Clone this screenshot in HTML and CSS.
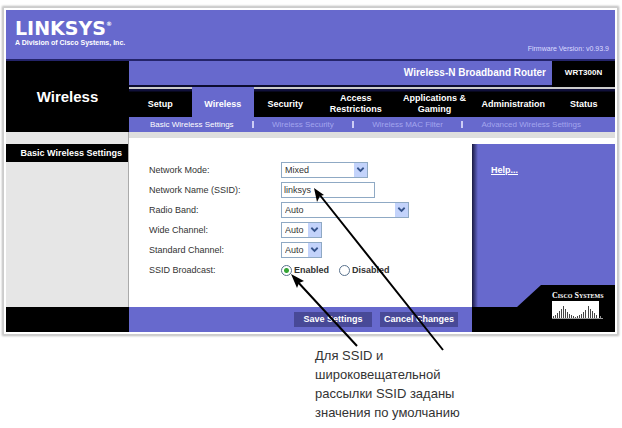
FILE: index.html
```html
<!DOCTYPE html>
<html lang="ru">
<head>
<meta charset="utf-8">
<title>Linksys WRT300N</title>
<link rel="stylesheet" href="styles.css">
</head>
<body>
<main class="figure">
  <div class="router">
    <header class="brand">
      <div class="brand-block">
        <div class="logo">LINKSYS<sup class="reg">®</sup></div>
        <div class="tagline">A Division of Cisco Systems, Inc.</div>
      </div>
      <div class="firmware">Firmware Version: v0.93.9</div>
    </header>

    <div class="top">
      <h1 class="section">Wireless</h1>
      <div class="menus">
        <div class="product">
          <div class="product-name">Wireless-N Broadband Router</div>
          <div class="model">WRT300N</div>
        </div>
        <nav class="tabs">
          <a class="tab" href="#">Setup</a>
          <a class="tab active" href="#">Wireless</a>
          <a class="tab" href="#">Security</a>
          <a class="tab wide" href="#">Access Restrictions</a>
          <a class="tab wide" href="#">Applications &amp; Gaming</a>
          <a class="tab wide" href="#">Administration</a>
          <a class="tab" href="#">Status</a>
        </nav>
        <nav class="subtabs">
          <a class="current" href="#">Basic Wireless Settings</a><i class="bar"></i>
          <a href="#">Wireless Security</a><i class="bar"></i>
          <a href="#">Wireless MAC Filter</a><i class="bar"></i>
          <a href="#">Advanced Wireless Settings</a>
        </nav>
      </div>
    </div>

    <div class="middle">
      <aside class="side"><h2 class="side-title">Basic Wireless Settings</h2></aside>
      <form class="settings" id="settings">
        <label for="mode">Network Mode:</label>
        <span class="select mode"><select id="mode"><option>Mixed</option></select><span class="drop"><svg viewBox="0 0 10 8"><path d="M1.500 1.500 5 5 8.500 1.500"/></svg></span></span>
        <label for="ssid">Network Name (SSID):</label>
        <input class="text" id="ssid" type="text" value="linksys">
        <label for="band">Radio Band:</label>
        <span class="select band"><select id="band"><option>Auto</option></select><span class="drop"><svg viewBox="0 0 10 8"><path d="M1.500 1.500 5 5 8.500 1.500"/></svg></span></span>
        <label for="wide">Wide Channel:</label>
        <span class="select channel"><select id="wide"><option>Auto</option></select><span class="drop"><svg viewBox="0 0 10 8"><path d="M1.500 1.500 5 5 8.500 1.500"/></svg></span></span>
        <label for="standard">Standard Channel:</label>
        <span class="select channel"><select id="standard"><option>Auto</option></select><span class="drop"><svg viewBox="0 0 10 8"><path d="M1.500 1.500 5 5 8.500 1.500"/></svg></span></span>
        <span id="broadcast">SSID Broadcast:</span>
        <span class="radios" role="radiogroup" aria-labelledby="broadcast">
          <label class="radio"><input type="radio" name="broadcast" checked>Enabled</label>
          <label class="radio"><input type="radio" name="broadcast">Disabled</label>
        </span>
      </form>
      <aside class="help">
        <div class="help-panel">
          <a href="#">Help...</a>
          <svg class="wedge" viewBox="0 0 143 22" preserveAspectRatio="none"><path d="M0 22H45L69 0H143V22Z"/></svg>
        </div>
      </aside>
    </div>

    <footer class="bottom">
      <div class="bottom-side"></div>
      <div class="actions">
        <button type="submit" form="settings">Save Settings</button>
        <button type="reset" form="settings">Cancel Changes</button>
      </div>
      <div class="corner">
        <div class="cisco">
          <div class="cisco-name">C<small>ISCO</small> S<small>YSTEMS</small></div>
          <svg class="bridge" viewBox="0 0 51 18">
            <path fill="#fff" d="M0 0H47V17H0Z"/>
            <path stroke="#444" stroke-width="1" d="M1.500 15V17M3.500 14V17M5.500 12V17M7.500 10V17M9.500 8V17M11.500 5V17M13.500 8V17M15.500 11V17M17.500 13V17M19.500 14V17M21.500 15V17M23.500 16V17M25.500 15V17M27.500 14V17M29.500 13V17M31.500 11V17M33.500 9V17M36.500 5V17M38.500 8V17M40.500 10V17M42.500 12V17M44.500 14V17"/>
            <path stroke="#999" d="M0 17.500H51M48.500 15V18"/>
          </svg>
        </div>
      </div>
    </footer>
  </div>

  <p class="caption">Для SSID и широковещательной рассылки SSID заданы значения по умолчанию</p>

  <svg class="arrows" width="622" height="428" viewBox="0 0 622 428" aria-hidden="true">
    <path class="shaft" d="M357 346 296 280M443 350 319 194"/>
    <path d="M291 274 304 281 299 283 297 288ZM314 188 324 195 320 196 317 202Z"/>
  </svg>
</main>
</body>
</html>
```
FILE: styles.css
```css
* { box-sizing: border-box; }

body {
  margin: 0;
  background: #fff;
  font-family: "Liberation Sans", Arial, sans-serif;
  font-size: 9px;
  line-height: 12px;
  color: #333;
}

a { color: inherit; text-decoration: none; }

.figure { position: relative; padding: 8px 5px 0 4px; }

.router {
  border: 2px solid #fff;
  box-shadow: 0 0 0 1px #ccc, 0 0 2px 2px #bbb;
}

.brand {
  display: flex;
  justify-content: space-between;
  align-items: flex-end;
  height: 51px;
  padding: 0 6px 6px 9px;
  background: #6769cd;
  border-bottom: 2px solid #24246a;
  color: #fff;
}
.brand-block { align-self: flex-start; padding-top: 7px; }
.logo {
  font-family: "DejaVu Sans", sans-serif;
  font-weight: bold;
  font-size: 19px;
  line-height: 22px;
}
.reg { font-size: 6px; line-height: 6px; vertical-align: 9px; }
.tagline { font-size: 7px; font-weight: bold; line-height: 8px; }
.firmware { font-size: 7px; line-height: 8px; color: #dcdcff; }

.top { display: flex; }
.section {
  flex: 0 0 123px;
  display: flex;
  align-items: center;
  justify-content: center;
  margin: 0;
  background: #000;
  color: #fff;
  font-size: 15px;
}
.menus { flex: 1; min-width: 0; background: #6769cd; }
.product {
  display: flex;
  height: 26px;
  line-height: 24px;
  color: #fff;
  font-weight: bold;
}
.product-name {
  flex: 1;
  padding-right: 6px;
  text-align: right;
  font-size: 10px;
  border-bottom: 2px solid #0d0d30;
}
.model { flex: 0 0 63px; background: #000; text-align: center; font-size: 8px; }

.tabs { display: flex; height: 30px; }
.tab {
  flex: 62;
  display: flex;
  align-items: center;
  justify-content: center;
  padding-top: 2px;
  border-top: 2px solid #ccc;
  background: linear-gradient(#10103a 2px, #000 3px);
  color: #fff;
  font-size: 9px;
  font-weight: bold;
  line-height: 11px;
  text-align: center;
}
.tab.wide { flex: 78; }
.tab.active { background: #6769cd; border-color: #6769cd; }

.subtabs {
  display: flex;
  align-items: center;
  justify-content: space-between;
  height: 15px;
  padding: 0 34px 0 21px;
  color: #a3a5ed;
  font-size: 8px;
}
.subtabs .current { color: #fff; }
.bar { width: 2px; height: 7px; background: #ccccf5; }

.middle { display: flex; height: 175px; }
.side {
  flex: 0 0 123px;
  padding-top: 12px;
  background: #e6e6e6;
  border-right: 1px solid #aaa;
}
.side-title {
  margin: 0;
  padding-right: 6px;
  background: #000;
  color: #fff;
  font-size: 9px;
  line-height: 18px;
  text-align: right;
}
.settings {
  flex: 1;
  display: grid;
  grid-template-columns: 132px 1fr;
  grid-auto-rows: 20px;
  align-content: start;
  align-items: center;
  padding: 22px 20px 0 20px;
  border-top: 6px solid #dedede;
}
.select { position: relative; height: 16px; display: block; }
.mode { width: 87px; }
.band { width: 128px; }
.channel { width: 41px; }
.select select, .text {
  display: block;
  width: 100%;
  height: 16px;
  margin: 0;
  padding: 0 3px;
  border: 1px solid #8fa9c4;
  border-radius: 0;
  background: #fff;
  color: #333;
  font: 9px/14px "Liberation Sans", Arial, sans-serif;
  appearance: none;
}
.text { width: 94px; padding: 0 2px; }
.drop {
  position: absolute;
  top: 1px;
  right: 1px;
  width: 13px;
  height: 14px;
  background: #c3d3fb;
  pointer-events: none;
}
.drop svg { display: block; width: 9px; height: 14px; margin: 0 auto; }
.drop path { fill: none; stroke: #36548c; stroke-width: 2; }

.radios { display: flex; gap: 10px; font-weight: bold; }
.radio { display: flex; align-items: center; gap: 2px; }
.radio input {
  appearance: none;
  width: 11px;
  height: 11px;
  margin: 0;
  border: 1px solid #58718c;
  border-radius: 50%;
  background: #fff;
}
.radio input:checked { background: radial-gradient(circle, #35a535 2px, #fff 3px); }

.help {
  flex: 0 0 143px;
  display: flex;
  padding-top: 6px;
  border-top: 6px solid #dedede;
}
.help-panel {
  flex: 1;
  display: flex;
  flex-direction: column;
  justify-content: space-between;
  background: linear-gradient(90deg, #181840, #6769cd 6px);
  color: #fff;
  font-weight: bold;
}
.help a { margin: 20px 0 0 19px; text-decoration: underline; }
.wedge { display: block; width: 100%; height: 22px; }

.bottom { display: flex; height: 25px; }
.bottom-side { flex: 0 0 123px; background: #000; }
.actions {
  flex: 1;
  display: flex;
  justify-content: flex-end;
  align-items: center;
  gap: 8px;
  padding-right: 14px;
  background: #6769cd;
}
.actions button {
  width: 78px;
  height: 15px;
  padding: 0;
  border: 0;
  background: #484997;
  color: #fff;
  font: bold 9px/15px "Liberation Sans", Arial, sans-serif;
  white-space: nowrap;
}
.corner { position: relative; flex: 0 0 143px; background: #000; }
.cisco { position: absolute; right: 12px; bottom: 13px; width: 51px; color: #fff; }
.cisco-name {
  font: bold 8px/9px "Liberation Serif", serif;
  white-space: nowrap;
}
.cisco-name small { font-size: 6px; }
.bridge { display: block; width: 51px; height: 18px; }

.caption {
  width: 160px;
  margin: 12px 0 0 311px;
  font-size: 13px;
  line-height: 19px;
}

.arrows { position: absolute; top: 0; left: 0; pointer-events: none; }
.arrows path { fill: #000; }
.arrows .shaft { fill: none; stroke: #000; stroke-width: 2; }
```
